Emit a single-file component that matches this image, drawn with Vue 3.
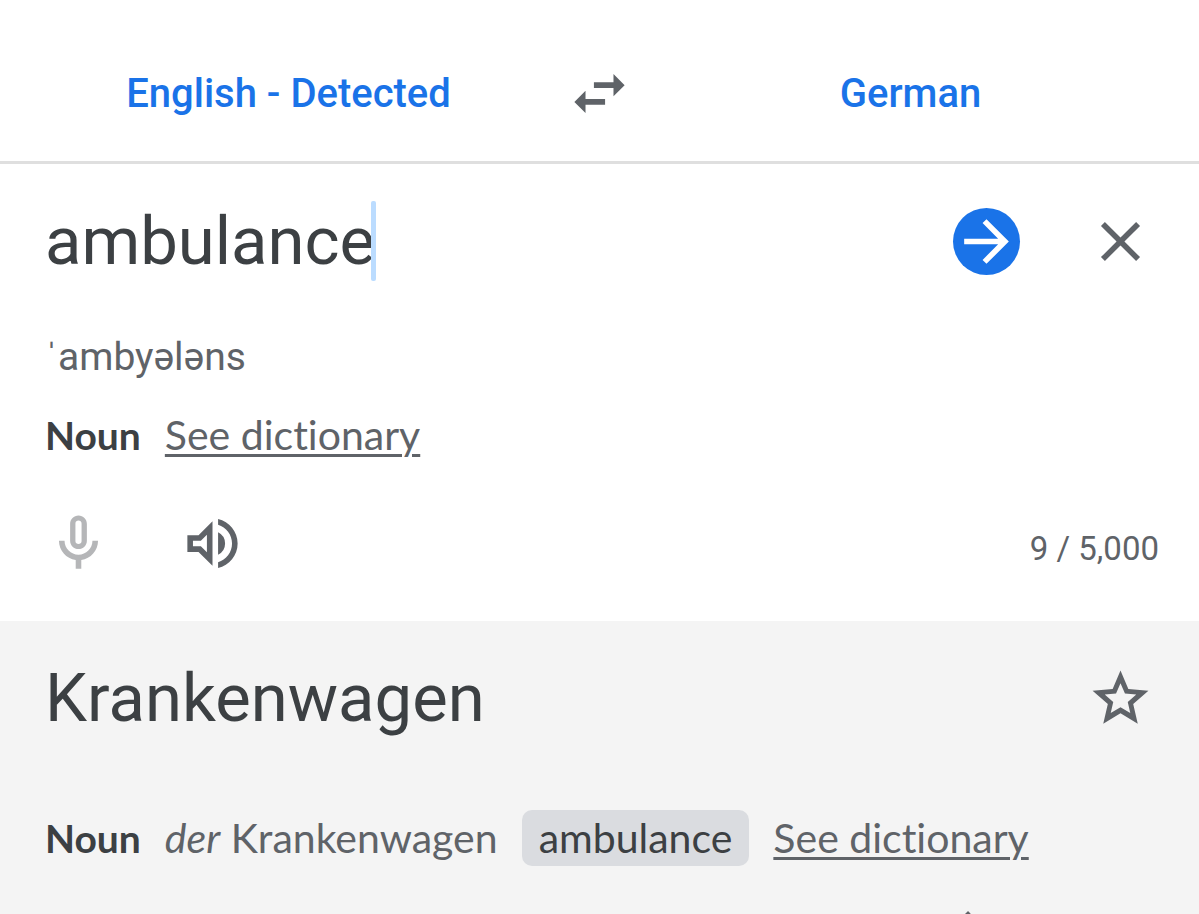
<script setup>
import { ref } from 'vue'

const source = ref('ambulance')
const limit = 5000
</script>

<template>
  <main class="translator">
    <header class="languages">
      <button type="button" class="language">English - Detected</button>
      <button type="button" class="icon-button" aria-label="Swap languages">
        <svg class="icon" viewBox="0 0 24 24"><path d="M6.99 11L3 15l3.99 4v-3H14v-2H6.99v-3zM21 9l-3.99-4v3H10v2h7.01v3L21 9z" /></svg>
      </button>
      <button type="button" class="language">German</button>
    </header>

    <section class="source">
      <div class="headline">
        <div class="entry">
          <input v-model="source" class="word field" type="text" aria-label="Source text" />
          <span class="caret"></span>
        </div>
        <div class="actions">
          <button type="button" class="icon-button go" aria-label="Translate">
            <svg class="icon" viewBox="0 0 24 24"><path d="M12 4l-1.41 1.41L16.17 11H4v2h12.17l-5.58 5.59L12 20l8-8z" /></svg>
          </button>
          <button type="button" class="icon-button" aria-label="Clear source text">
            <svg class="icon" viewBox="0 0 24 24"><path d="M19 6.41L17.59 5 12 10.59 6.41 5 5 6.41 10.59 12 5 17.59 6.41 19 12 13.41 17.59 19 19 17.59 13.41 12z" /></svg>
          </button>
        </div>
      </div>
      <p class="phonetic">ˈambyələns</p>
      <div class="details">
        <strong class="part">Noun</strong>
        <a class="dictionary" href="#dictionary">See dictionary</a>
      </div>
      <div class="tools">
        <button type="button" class="icon-button mic" aria-label="Translate by voice" disabled>
          <svg class="icon" viewBox="0 0 24 24"><path fill-rule="evenodd" d="M12 14c1.66 0 3-1.34 3-3V5c0-1.66-1.34-3-3-3S9 3.34 9 5v6c0 1.66 1.34 3 3 3zm-1.1-9.2c0-.66.54-1 1.1-1s1.1.34 1.1 1v6.4c0 .66-.54 1-1.1 1s-1.1-.34-1.1-1V4.8zM17 11c0 2.76-2.24 5-5 5s-5-2.24-5-5H5c0 3.53 2.61 6.43 6 6.92V21h2v-3.08c3.39-.49 6-3.39 6-6.92h-2z" /></svg>
        </button>
        <button type="button" class="icon-button" aria-label="Listen">
          <svg class="icon" viewBox="0 0 24 24"><path fill-rule="evenodd" d="M3 9v6h4l5 5V4L7 9H3zm7-.17v6.34L7.83 13H5v-2h2.83L10 8.83z" /><path d="M16.5 12A4.5 4.5 0 0 0 14 7.97v8.05A4.47 4.47 0 0 0 16.5 12zM14 3.23v2.06c2.89.86 5 3.54 5 6.71s-2.11 5.85-5 6.71v2.06c4.01-.91 7-4.49 7-8.77s-2.99-7.86-7-8.77z" /></svg>
        </button>
        <span class="count">{{ source.length }} / {{ limit.toLocaleString('en-US') }}</span>
      </div>
    </section>

    <section class="result">
      <div class="headline">
        <h1 class="word">Krankenwagen</h1>
        <button type="button" class="icon-button" aria-label="Save translation">
          <svg class="icon" viewBox="0 0 24 24"><path d="M22 9.24l-7.19-.62L12 2 9.19 8.63 2 9.24l5.46 4.73L5.82 21 12 17.27 18.18 21l-1.63-7.03L22 9.24zM12 15.1l-3.5 2.1.9-3.95-3.05-2.65 4.05-.36L12 6.5l1.6 3.74 4.05.36-3.05 2.65.9 3.95L12 15.1z" /></svg>
        </button>
      </div>
      <div class="details">
        <strong class="part">Noun</strong>
        <span class="translation"><i>der</i> Krankenwagen</span>
        <button type="button" class="chip">ambulance</button>
        <a class="dictionary" href="#dictionary">See dictionary</a>
      </div>
      <div class="actions feedback">
        <button type="button" class="icon-button" aria-label="Rate this translation">
          <svg class="icon" viewBox="0 0 24 24"><path d="M12 6c0-.55-.45-1-1-1H5.82l.66-3.18.02-.23c0-.31-.13-.59-.33-.8L5.38 0 .44 4.94C.17 5.21 0 5.59 0 6v6.5c0 .83.67 1.5 1.5 1.5h6.75c.62 0 1.15-.38 1.38-.91l2.26-5.29c.07-.17.11-.36.11-.55V6zm10.5 4h-6.75c-.62 0-1.15.38-1.38.91l-2.26 5.29c-.07.17-.11.36-.11.55V18c0 .55.45 1 1 1h5.18l-.66 3.18-.02.24c0 .31.13.59.33.8l.79.78 4.94-4.94c.27-.27.44-.65.44-1.06v-6.5c0-.83-.67-1.5-1.5-1.5z" /></svg>
        </button>
        <button type="button" class="icon-button" aria-label="More options">
          <svg class="icon" viewBox="0 0 24 24"><path d="M12 8a2 2 0 1 0 0-4 2 2 0 0 0 0 4zm0 2a2 2 0 1 0 0 4 2 2 0 0 0 0-4zm0 6a2 2 0 1 0 0 4 2 2 0 0 0 0-4z" /></svg>
        </button>
      </div>
    </section>
  </main>
</template>

<style>
html,
body,
#app {
  height: 100%;
}
body {
  margin: 0;
  overflow: hidden;
}
</style>

<style scoped>
.translator {
  display: flex;
  flex-direction: column;
  min-height: 100%;
  background: #fff;
  color: #5f6368;
  font-family: Roboto, "Liberation Sans", sans-serif;
}
button {
  margin: 0;
  padding: 0;
  border: 0;
  background: none;
  color: inherit;
  font: inherit;
}
.icon-button {
  display: flex;
  flex: none;
}
.icon {
  display: block;
  width: 67px;
  height: 67px;
  fill: currentColor;
}
.languages {
  display: grid;
  grid-template-columns: 1fr auto 1fr;
  align-items: center;
  height: 135px;
  padding: 26px 11px 0;
  border-bottom: 3px solid #dfdfdf;
}
.language {
  color: #1a73e8;
  font-size: 40px;
  font-weight: 500;
  line-height: 56px;
  white-space: nowrap;
}
.source,
.result {
  padding: 33px 45px 0;
}
.headline {
  display: flex;
  align-items: center;
  justify-content: space-between;
  height: 88px;
}
.entry,
.actions {
  display: flex;
  align-items: center;
}
.actions {
  gap: 67px;
}
.word {
  margin: 0;
  color: #3c4043;
  font-size: 67px;
  font-weight: 400;
  line-height: 88px;
}
.field {
  field-sizing: content;
  height: 88px;
  padding: 0;
  border: 0;
  outline: 0;
  background: none;
  font-family: inherit;
}
.caret {
  width: 5px;
  height: 80px;
  margin-left: -4px;
  border-radius: 2px;
  background: #bbdcff;
}
.go {
  border-radius: 50%;
  background: #1a73e8;
  color: #fff;
}
.phonetic {
  margin: 44px 0 0;
  font-size: 39px;
  line-height: 56px;
}
.details {
  display: flex;
  align-items: center;
  gap: 24px;
  margin-top: 22px;
  font-family: Lato, "Open Sans", sans-serif;
  font-size: 41px;
  font-variant-ligatures: none;
  line-height: 56px;
  white-space: nowrap;
}
.part {
  color: #3c4043;
  font-size: 39px;
  font-weight: 700;
}
.dictionary {
  color: inherit;
  text-decoration-thickness: 3px;
  text-underline-offset: 4px;
}
.tools {
  display: flex;
  align-items: center;
  gap: 67px;
  margin-right: -5px;
  margin-top: 47px;
  padding-bottom: 44px;
}
.mic {
  color: #b5b6b8;
}
.count {
  align-self: flex-end;
  margin-left: auto;
  font-size: 33px;
  line-height: 56px;
}
.result {
  flex: 1;
  background: #f4f4f4;
}
.result .details {
  margin-top: 68px;
}
.chip {
  padding: 0 17px;
  border-radius: 10px;
  background: #dadce0;
  color: #3c4043;
}
.feedback {
  justify-content: flex-end;
  height: 48px;
  margin-top: 45px;
  align-items: flex-start;
}
</style>
